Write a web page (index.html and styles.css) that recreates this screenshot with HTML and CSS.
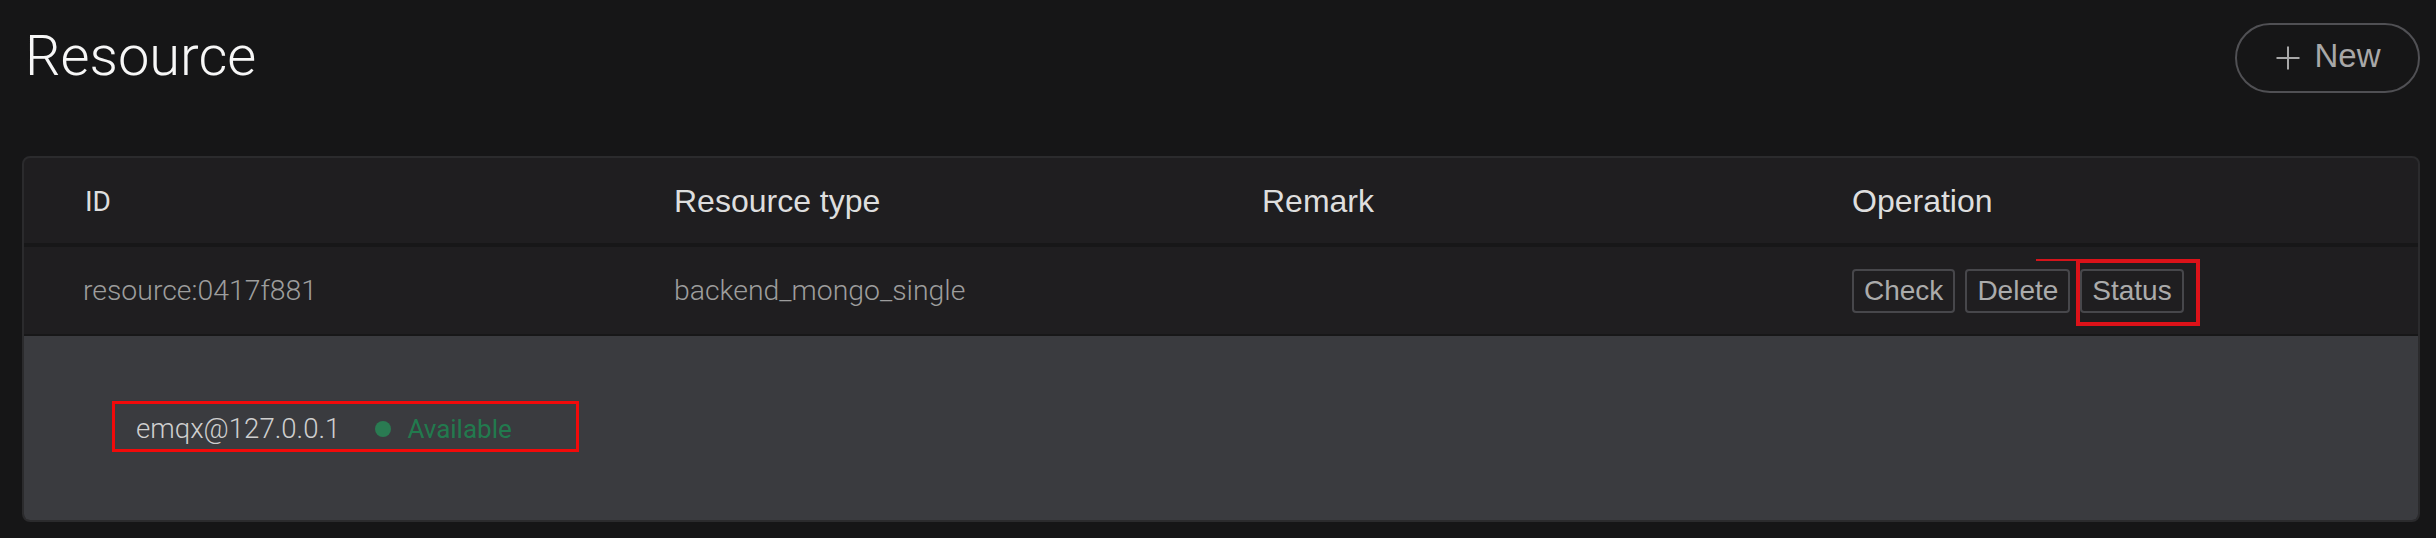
FILE: index.html
```html
<!DOCTYPE html>
<html lang="en">
<head>
<meta charset="utf-8">
<title>Resource</title>
<link rel="stylesheet" href="styles.css">
</head>
<body>
<div class="page">
  <header class="page-head">
    <h1 class="title">Resource</h1>
    <button class="btn-new">
      <svg class="plus" width="24" height="24" viewBox="0 0 24 24" aria-hidden="true">
        <path d="M12 0.5V23.5M0.5 12H23.5" stroke="#a8a8a8" stroke-width="2" fill="none"/>
      </svg>
      <span>New</span>
    </button>
  </header>

  <section class="panel">
    <div class="row head">
      <div class="cell id-head">ID</div>
      <div class="cell">Resource type</div>
      <div class="cell">Remark</div>
      <div class="cell">Operation</div>
    </div>
    <div class="row body">
      <div class="cell mono">resource:0417f881</div>
      <div class="cell mono">backend_mongo_single</div>
      <div class="cell"></div>
      <div class="cell ops">
        <button class="btn-op">Check</button>
        <button class="btn-op">Delete</button>
        <span class="status-wrap">
          <button class="btn-op">Status</button>
          <span class="mark-line"></span>
          <span class="mark-box"></span>
        </span>
      </div>
    </div>
    <div class="expand">
      <div class="node">
        <span class="node-name">emqx@127.0.0.1</span>
        <span class="dot"></span>
        <span class="avail">Available</span>
      </div>
    </div>
  </section>
</div>
</body>
</html>
```

FILE: styles.css
```css
html, body {
  margin: 0;
  padding: 0;
  background: #161617;
}

.page {
  padding: 23px 16px 0 22px;
}

.page-head {
  display: flex;
  justify-content: space-between;
  align-items: center;
  height: 70px;
}

.title {
  margin: 0 0 5px 3px;
  font-family: Roboto, "Liberation Sans", sans-serif;
  font-weight: 300;
  font-size: 56px;
  line-height: 56px;
  color: #f7f7f7;
}

.btn-new {
  box-sizing: border-box;
  width: 185px;
  height: 70px;
  border: 2px solid #505054;
  border-radius: 35px;
  background: transparent;
  display: flex;
  align-items: center;
  justify-content: center;
  gap: 14px;
  padding: 0 0 5px 2px;
  font-family: "Liberation Sans", Arial, sans-serif;
  font-size: 33px;
  line-height: 33px;
  color: #a8a8a8;
}

.plus {
  display: block;
  margin-top: 4px;
}

.panel {
  margin-top: 63px;
  border: 2px solid #2b2b2d;
  border-radius: 8px;
  overflow: hidden;
  background: #1f1e20;
}

.row {
  display: grid;
  grid-template-columns: 591px 588px 590px 1fr;
  align-items: center;
}

.cell {
  padding-left: 59px;
}

.head {
  height: 85px;
  border-bottom: 4px solid #171718;
  font-family: "Liberation Sans", Arial, sans-serif;
  font-size: 32px;
  line-height: 36px;
  color: #dedede;
}

.id-head {
  font-family: Roboto, "Liberation Sans", sans-serif;
  font-size: 28px;
  margin-top: 2px;
  padding-left: 61px;
}

.body {
  height: 87px;
  border-bottom: 2px solid #171718;
}

.mono {
  font-family: Roboto, "Liberation Sans", sans-serif;
  font-weight: 300;
  font-size: 28.4px;
  line-height: 32px;
  color: #9d9d9d;
  padding-top: 1px;
}

.ops {
  display: flex;
  align-items: center;
  gap: 10px;
}

.btn-op {
  box-sizing: border-box;
  height: 44px;
  padding: 0 10px;
  border: 2px solid #47474b;
  border-radius: 4px;
  background: #1f1e20;
  font-family: "Liberation Sans", Arial, sans-serif;
  font-size: 28px;
  line-height: 30px;
  color: #ababab;
}

.status-wrap {
  position: relative;
  display: block;
}

.status-wrap .btn-op {
  display: block;
}

.mark-box {
  position: absolute;
  left: -4px;
  top: -10px;
  width: 124px;
  height: 67px;
  box-sizing: border-box;
  border: 4px solid #dc1219;
}

.mark-line {
  position: absolute;
  left: -44px;
  top: -10px;
  width: 41px;
  height: 2px;
  background: #d4141b;
}

.expand {
  box-sizing: border-box;
  height: 184px;
  background: #3a3b3f;
  padding: 65px 0 0 88px;
}

.node {
  box-sizing: border-box;
  display: inline-flex;
  align-items: center;
  height: 51px;
  width: 467px;
  border: 3px solid #f20a0a;
  padding: 5px 0 0 21px;
  font-family: Roboto, "Liberation Sans", sans-serif;
  font-size: 26px;
  line-height: 30px;
}

.node-name {
  font-weight: 300;
  color: #cfcfcf;
  font-size: 27.6px;
}

.dot {
  width: 16px;
  height: 16px;
  border-radius: 50%;
  background: #2a7b52;
  margin: 0 16px 0 35px;
}

.avail {
  color: #227a4e;
  font-weight: 400;
}
```
